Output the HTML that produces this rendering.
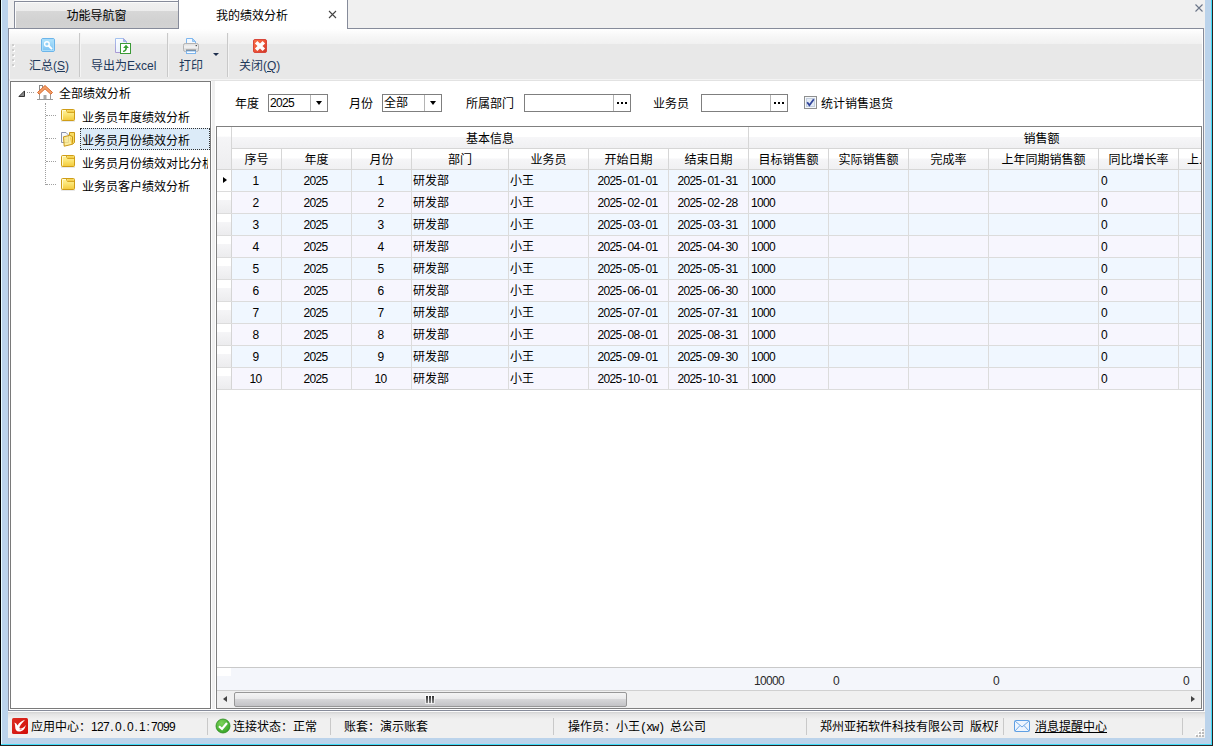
<!DOCTYPE html>
<html lang="zh-CN">
<head>
<meta charset="utf-8">
<title>我的绩效分析</title>
<style>
*{box-sizing:border-box;margin:0;padding:0}
html,body{width:1213px;height:746px;overflow:hidden}
body{position:relative;background:#bbd3eb;font-family:"Liberation Sans","Noto Sans CJK SC",sans-serif;font-size:12px;color:#000;line-height:1}
.abs{position:absolute}
#client{left:8px;top:0;width:1197px;height:738px;background:#f0f0f0}
/* tabs */
#tab1{left:14px;top:1px;width:165px;height:28px;border:1px solid #868b9a;background:linear-gradient(#f1f1f1 0,#ececec 9px,#d7d7d7 9px,#d1d1d1 20px,#d3d3d3 26px);box-shadow:inset 1px 1px 0 #fbfbfb;text-align:center;line-height:29px}
#tab2{left:179px;top:0;width:169px;height:29px;border-right:1px solid #868b9a;background:#fff;line-height:33px}
#frame{left:8px;top:28px;width:1196px;height:683px;border:1px solid #868b9a;background:#fff}
#frametopfix{left:179px;top:28px;width:168px;height:1px;background:#fff}
#toolbar{left:10px;top:29px;width:1192px;height:50px;background:linear-gradient(#ffffff 0,#f6f6f6 8px,#f1f1f1 15px,#e8e8e8 15px,#e8e8e8 100%)}
.tsep{top:33px;width:1px;height:44px;background:#c9c9c9;box-shadow:1px 0 0 #f4f4f4}
.tlabel{top:59px;height:14px;line-height:14px;color:#1e395b;white-space:nowrap;font-size:12px}
/* tree */
#tree{left:10px;top:81px;width:201px;height:628px;border:1px solid #7a7a7a;background:#fff;overflow:hidden}
.tnode{position:absolute;left:0;height:22px;line-height:22px;white-space:nowrap}
.folder{position:absolute;width:16px;height:16px}
/* right */
#right{left:216px;top:81px;width:987px;height:629px;background:#fff}
.lbl{position:absolute;top:97px;height:14px;line-height:14px;white-space:nowrap}
.combo{position:absolute;top:94px;height:18px;border:1px solid #7f7f7f;background:#fff;line-height:17px;padding-left:1px;white-space:nowrap}
.combo .btn{position:absolute;right:0;top:0;width:17px;height:16px;border-left:1px solid #b4b4b4}
.combo .btn i{position:absolute;left:5px;top:6px;border:3.5px solid transparent;border-top:4px solid #000;border-bottom:0}
.combo .dots{position:absolute;right:0;top:0;width:17px;height:16px;border-left:1px solid #b4b4b4}
.combo .dots b{position:absolute;left:3px;top:7px;width:2px;height:2px;background:#000;box-shadow:4px 0 0 #000,8px 0 0 #000}
/* grid */
#grid{left:216px;top:126px;width:986px;height:583px;border:1px solid #808080;background:#fff;overflow:hidden}
.hd{position:absolute;background:linear-gradient(#ffffff 0,#ffffff 47%,#f6f6f8 48%,#f0f0f2 100%);border-right:1px solid #d6d6d6;border-bottom:1px solid #d6d6d6;text-align:center;white-space:nowrap;overflow:hidden}
.row{position:absolute;left:0;width:984px;height:22px;border-bottom:1px solid #dcdcdc}
.row.a{background:#f0f7ff}
.row.b{background:#f7f6fe}
.c{position:absolute;top:0;height:21px;line-height:22px;border-right:1px solid #dcdcdc;white-space:nowrap;overflow:hidden;padding-left:1px}
.c.ctr{text-align:center;padding-left:0}
.c.n{line-height:22px;padding-left:2px}
.c.ctr.n{padding-left:0;padding-right:2px}
.ind{position:absolute;left:0;top:0;width:15px;height:21px;background:linear-gradient(#ffffff 0,#ffffff 38%,#f5f5f7 40%,#ececee 100%);border-right:1px solid #d5d5d5}
.n{font-family:"Liberation Sans","Noto Sans CJK SC",sans-serif;letter-spacing:-0.67px}
.n i{display:inline-block;width:6px;text-align:center;letter-spacing:0;font-style:normal}
.m{font-family:"Liberation Mono","Noto Sans CJK SC",monospace;letter-spacing:-1.2px}
/* status */
.sb{position:absolute;top:720px;height:14px;line-height:14px;white-space:nowrap}
.ssep{position:absolute;top:718px;width:1px;height:17px;background:#c9c9c9}
</style>
</head>
<body>
<div class="abs" id="client"></div>
<div class="abs" style="left:0;top:0;width:1px;height:746px;background:#000"></div>
<div class="abs" style="left:1px;top:0;width:1px;height:744px;background:#e6fbff"></div>
<div class="abs" style="left:1px;top:744px;width:1211px;height:1px;background:#3fdcf8"></div>
<div class="abs" style="left:1211px;top:0;width:1px;height:745px;background:#3fdcf8"></div>
<div class="abs" style="left:0;top:745px;width:1213px;height:1px;background:#2b2222"></div>
<div class="abs" style="left:1212px;top:0;width:1px;height:746px;background:#2b2222"></div>

<div class="abs" id="frame"></div>
<div class="abs" style="left:15px;top:0;width:163px;height:1px;background:#fbfbfb"></div>
<div class="abs" style="left:178px;top:0;width:1px;height:2px;background:#868b9a"></div>
<div class="abs" id="tab1">功能导航窗</div>
<div class="abs" id="tab2"><span style="position:absolute;left:37px">我的绩效分析</span>
<svg class="abs" style="left:149px;top:10px" width="9" height="9" viewBox="0 0 9 9"><path d="M1 1L8 8M8 1L1 8" stroke="#444" stroke-width="1.1" fill="none"/></svg></div>
<div class="abs" id="frametopfix"></div>
<svg class="abs" style="left:1194px;top:3px" width="10" height="10" viewBox="0 0 10 10"><path d="M1.5 1.5L8.5 8.5M8.5 1.5L1.5 8.5" stroke="#6b7588" stroke-width="1.1" fill="none"/></svg>

<div class="abs" id="toolbar"></div>
<div class="abs" style="left:9px;top:79px;width:1194px;height:2px;background:#f4f4f4"></div>
<div class="abs" style="left:211px;top:80px;width:992px;height:1px;background:#e2e2e2"></div>
<div class="abs" style="left:212px;top:81px;width:3px;height:628px;background:#f0f0f0"></div>
<div class="abs" style="left:12px;top:44px;width:2px;height:2px;background:#cdcdcd;box-shadow:1px 1px 0 #fff"></div>
<div class="abs" style="left:12px;top:49px;width:2px;height:2px;background:#cdcdcd;box-shadow:1px 1px 0 #fff"></div>
<div class="abs" style="left:12px;top:54px;width:2px;height:2px;background:#cdcdcd;box-shadow:1px 1px 0 #fff"></div>
<div class="abs" style="left:12px;top:59px;width:2px;height:2px;background:#cdcdcd;box-shadow:1px 1px 0 #fff"></div>
<div class="abs" style="left:12px;top:64px;width:2px;height:2px;background:#cdcdcd;box-shadow:1px 1px 0 #fff"></div>
<div class="abs tsep" style="left:79px"></div>
<div class="abs tsep" style="left:167px"></div>
<div class="abs tsep" style="left:227px"></div>
<svg class="abs" style="left:41px;top:38px" width="14" height="14" viewBox="0 0 14 14">
<defs><linearGradient id="sg" x1="0" y1="0" x2="0" y2="1"><stop offset="0" stop-color="#b4e6fd"/><stop offset="1" stop-color="#79c0f2"/></linearGradient></defs>
<rect x=".5" y=".5" width="13" height="13" rx="1.5" fill="url(#sg)" stroke="#6cb5ea"/>
<rect x="1.5" y="1.5" width="11" height="11" fill="none" stroke="#a8dcfa" stroke-width="1"/>
<circle cx="5.9" cy="6" r="2.3" fill="#8fd0f8" stroke="#fff" stroke-width="1.4"/>
<path d="M7.9 8L10.3 10.4" stroke="#fff" stroke-width="2" stroke-linecap="square"/>
</svg>
<div class="abs tlabel" style="left:29px">汇总(<u>S</u>)</div>
<svg class="abs" style="left:115px;top:38px" width="17" height="17" viewBox="0 0 17 17">
<defs><linearGradient id="pg" x1="0" y1="0" x2="1" y2="1"><stop offset="0" stop-color="#ffffff"/><stop offset="1" stop-color="#dbeafb"/></linearGradient>
<linearGradient id="pb" x1="0" y1="0" x2="0" y2="1"><stop offset="0" stop-color="#a3c2ef"/><stop offset="1" stop-color="#a998d4"/></linearGradient></defs>
<path d="M.5 .5H8.5L11.5 3.5V14.5H.5Z" fill="url(#pg)" stroke="url(#pb)"/>
<path d="M8.5 .5V3.5H11.5Z" fill="#8cc4f6" stroke="#a79fd8" stroke-width=".8"/>
<rect x="5.5" y="5.5" width="10" height="10" fill="#fff" stroke="#3c9a37"/>
<path d="M11 6.8L13.9 10H12C12 12.4 10.6 13.9 8 13.9V12.7C9.4 12.6 10.2 11.8 10.2 10H8.1Z" fill="#38a032"/>
</svg>
<div class="abs tlabel" style="left:91px">导出为Excel</div>
<svg class="abs" style="left:183px;top:38px" width="16" height="16" viewBox="0 0 16 16">
<defs><linearGradient id="prb" x1="0" y1="0" x2="0" y2="1"><stop offset="0" stop-color="#dcdcdc"/><stop offset=".45" stop-color="#f4f4f4"/><stop offset=".7" stop-color="#d9d9d9"/><stop offset="1" stop-color="#ececec"/></linearGradient></defs>
<path d="M3.5 .5H9.5L12.5 3.5V6H3.5Z" fill="#f3f9ff" stroke="#7eb6ee"/>
<path d="M9.5 .5V3.5H12.5Z" fill="#a8d2f7" stroke="#7eb6ee" stroke-width=".8"/>
<rect x=".5" y="5.5" width="15" height="8" rx="1.8" fill="url(#prb)" stroke="#b3b3b3"/>
<rect x="3" y="11.6" width="10" height="1.4" fill="#6f6f6f"/>
<rect x="3.5" y="13" width="9" height="2.5" fill="#fafdff" stroke="#7eb6ee"/>
<rect x="12.6" y="7" width="1.4" height="1.2" fill="#555"/>
</svg>
<div class="abs tlabel" style="left:179px">打印</div>
<div class="abs" style="left:213px;top:53px;width:0;height:0;border:3px solid transparent;border-top:3px solid #1e2f4d;border-bottom:0"></div>
<svg class="abs" style="left:253px;top:39px" width="14" height="14" viewBox="0 0 14 14">
<defs><linearGradient id="rg" x1="0" y1="0" x2="1" y2="1"><stop offset="0" stop-color="#f8744a"/><stop offset=".5" stop-color="#ee5536"/><stop offset="1" stop-color="#cc352b"/></linearGradient></defs>
<rect x=".5" y=".5" width="13" height="13" rx="1.5" fill="url(#rg)" stroke="#d8473a"/>
<path d="M4.4 1.9L7 4.5L9.6 1.9L12.1 4.4L9.5 7L12.1 9.6L9.6 12.1L7 9.5L4.4 12.1L1.9 9.6L4.5 7L1.9 4.4Z" fill="#fdfdfd"/>
</svg>
<div class="abs tlabel" style="left:239px">关闭(<u>Q</u>)</div>

<div class="abs" id="tree">
<svg class="abs" style="left:7px;top:8px" width="7" height="7" viewBox="0 0 7 7"><path d="M6.5 .9V6.5H.9Z" fill="#8a8a8a" stroke="#333" stroke-width="1"/></svg>
<div class="abs" style="left:16px;top:10px;width:7px;height:0;border-top:1px dotted #a0a0a0"></div>
<div class="abs" style="left:34px;top:21px;width:0;height:82px;border-left:1px dotted #a0a0a0"></div>
<div class="abs" style="left:35px;top:33px;width:10px;height:0;border-top:1px dotted #a0a0a0"></div>
<div class="abs" style="left:35px;top:56px;width:10px;height:0;border-top:1px dotted #a0a0a0"></div>
<div class="abs" style="left:35px;top:79px;width:10px;height:0;border-top:1px dotted #a0a0a0"></div>
<div class="abs" style="left:35px;top:102px;width:10px;height:0;border-top:1px dotted #a0a0a0"></div>
<svg class="abs" style="left:25px;top:2px" width="18" height="18" viewBox="0 0 18 18">
<rect x="3.5" y="1.5" width="3" height="5" fill="#fff" stroke="#8a8a8a"/>
<path d="M3.5 8V15.5H14.5V8L9 3Z" fill="#fff" stroke="#9a9a9a"/>
<rect x="7.5" y="11" width="3" height="4.5" fill="#a8a8a8"/>
<path d="M1.5 8.5L9 1.5L16.5 8.5L14.8 10.2L9 4.8L3.2 10.2Z" fill="#f3a06a" stroke="#d9682a" stroke-width="1"/>
<path d="M1 15.5H17" stroke="#9a9a9a"/>
</svg>
<div class="tnode" style="left:48px;top:1px">全部绩效分析</div>
<svg class="abs" style="left:50px;top:27px" width="14" height="13" viewBox="0 0 14 13">
<defs><linearGradient id="fg0" x1="0" y1="0" x2="0" y2="1"><stop offset="0" stop-color="#fff5a6"/><stop offset=".5" stop-color="#fbe36e"/><stop offset="1" stop-color="#f3c93a"/></linearGradient></defs>
<rect x="0" y="11.6" width="14" height="1.2" fill="#d8d8d8" opacity=".7"/>
<rect x=".5" y=".5" width="13" height="11" rx="1" fill="url(#fg0)" stroke="#cf9d17"/>
<path d="M5.3 1L6.4 3.5H13" fill="none" stroke="#d7a823" stroke-width="1"/>
<path d="M6.2 1.2H12.8V3H7Z" fill="#f4cf4a"/>
<path d="M1.5 10.5V1.5H5" fill="none" stroke="#fffbd6" stroke-width="1" opacity=".9"/>
</svg>
<div class="tnode" style="left:71px;top:25px">业务员年度绩效分析</div>
<div class="abs" style="left:69px;top:46px;width:130px;height:22px;background:#dcebf8;border:1px dotted #333"></div>
<svg class="abs" style="left:50px;top:50px" width="15" height="15" viewBox="0 0 15 15">
<path d="M.5 .5H5L7.5 3V10.5H.5Z" fill="#f6f8fc" stroke="#8c93ab"/>
<path d="M2.5 5.5H5.5M2.5 7.5H5.5" stroke="#c9d3ea"/>
<path d="M8.5 3V.5H13.5V10.5L11.5 12.2" fill="#f7dc63" stroke="#c99716"/>
<path d="M2.5 4.8L8.8 3.4L11.5 4.6V12.2L3.2 14.2Z" fill="#fae88a" fill-opacity=".82" stroke="#c99716"/>
<path d="M9.5 5.5L11 12" stroke="#f2c945" stroke-width="1.2"/>
</svg>
<div class="tnode" style="left:71px;top:48px">业务员月份绩效分析</div>
<svg class="abs" style="left:50px;top:73px" width="14" height="13" viewBox="0 0 14 13">
<defs><linearGradient id="fg2" x1="0" y1="0" x2="0" y2="1"><stop offset="0" stop-color="#fff5a6"/><stop offset=".5" stop-color="#fbe36e"/><stop offset="1" stop-color="#f3c93a"/></linearGradient></defs>
<rect x="0" y="11.6" width="14" height="1.2" fill="#d8d8d8" opacity=".7"/>
<rect x=".5" y=".5" width="13" height="11" rx="1" fill="url(#fg2)" stroke="#cf9d17"/>
<path d="M5.3 1L6.4 3.5H13" fill="none" stroke="#d7a823" stroke-width="1"/>
<path d="M6.2 1.2H12.8V3H7Z" fill="#f4cf4a"/>
<path d="M1.5 10.5V1.5H5" fill="none" stroke="#fffbd6" stroke-width="1" opacity=".9"/>
</svg>
<div class="tnode" style="left:71px;top:71px;width:126px;overflow:hidden">业务员月份绩效对比分析</div>
<svg class="abs" style="left:50px;top:96px" width="14" height="13" viewBox="0 0 14 13">
<defs><linearGradient id="fg3" x1="0" y1="0" x2="0" y2="1"><stop offset="0" stop-color="#fff5a6"/><stop offset=".5" stop-color="#fbe36e"/><stop offset="1" stop-color="#f3c93a"/></linearGradient></defs>
<rect x="0" y="11.6" width="14" height="1.2" fill="#d8d8d8" opacity=".7"/>
<rect x=".5" y=".5" width="13" height="11" rx="1" fill="url(#fg3)" stroke="#cf9d17"/>
<path d="M5.3 1L6.4 3.5H13" fill="none" stroke="#d7a823" stroke-width="1"/>
<path d="M6.2 1.2H12.8V3H7Z" fill="#f4cf4a"/>
<path d="M1.5 10.5V1.5H5" fill="none" stroke="#fffbd6" stroke-width="1" opacity=".9"/>
</svg>
<div class="tnode" style="left:71px;top:94px">业务员客户绩效分析</div>
</div>

<div class="abs" id="right"></div>
<div class="lbl" style="left:235px">年度</div>
<div class="combo" style="left:268px;width:60px"><span class="n">2025</span><span class="btn"><i></i></span></div>
<div class="lbl" style="left:349px">月份</div>
<div class="combo" style="left:382px;width:60px">全部<span class="btn"><i></i></span></div>
<div class="lbl" style="left:466px">所属部门</div>
<div class="combo" style="left:524px;width:107px"><span class="dots"><b></b></span></div>
<div class="lbl" style="left:653px">业务员</div>
<div class="combo" style="left:701px;width:87px"><span class="dots"><b></b></span></div>
<svg class="abs" style="left:804px;top:96px" width="13" height="13" viewBox="0 0 13 13">
<rect x=".5" y=".5" width="12" height="12" fill="#f4f7fb" stroke="#8e8f8f"/>
<rect x="2.5" y="2.5" width="8" height="8" fill="#e4ebf5" stroke="#c3cede" stroke-width="1"/>
<path d="M3.2 6.2L5.4 9.2L9.8 3.2" fill="none" stroke="#31459b" stroke-width="1.8"/>
</svg>
<div class="lbl" style="left:821px">统计销售退货</div>

<div class="abs" id="grid">
<div class="hd" style="left:0;top:0;width:15px;height:43px;background:linear-gradient(#fff 0,#fff 22%,#f5f5f7 24%,#ededef 100%)"></div>
<div class="hd" style="left:15px;top:0;width:517px;height:22px;line-height:25px">基本信息</div>
<div class="hd" style="left:532px;top:0;width:586px;height:22px;line-height:25px">销售额</div>
<div class="hd" style="left:15px;top:22px;width:50px;height:21px;line-height:23px">序号</div>
<div class="hd" style="left:65px;top:22px;width:70px;height:21px;line-height:23px">年度</div>
<div class="hd" style="left:135px;top:22px;width:60px;height:21px;line-height:23px">月份</div>
<div class="hd" style="left:195px;top:22px;width:97px;height:21px;line-height:23px">部门</div>
<div class="hd" style="left:292px;top:22px;width:80px;height:21px;line-height:23px">业务员</div>
<div class="hd" style="left:372px;top:22px;width:80px;height:21px;line-height:23px">开始日期</div>
<div class="hd" style="left:452px;top:22px;width:80px;height:21px;line-height:23px">结束日期</div>
<div class="hd" style="left:532px;top:22px;width:80px;height:21px;line-height:23px">目标销售额</div>
<div class="hd" style="left:612px;top:22px;width:80px;height:21px;line-height:23px">实际销售额</div>
<div class="hd" style="left:692px;top:22px;width:80px;height:21px;line-height:23px">完成率</div>
<div class="hd" style="left:772px;top:22px;width:110px;height:21px;line-height:23px">上年同期销售额</div>
<div class="hd" style="left:882px;top:22px;width:80px;height:21px;line-height:23px">同比增长率</div>
<div class="hd" style="left:962px;top:22px;width:80px;height:21px;line-height:23px;text-align:left;padding-left:8px">上.</div>
<div class="row a" style="top:43px"><div class="ind" style="background:#fff"><i style="position:absolute;left:6px;top:7px;border:3.5px solid transparent;border-left:4px solid #000;border-right:0"></i></div><div class="c ctr n" style="left:15px;width:50px">1</div><div class="c ctr n" style="left:65px;width:70px">2025</div><div class="c ctr n" style="left:135px;width:60px">1</div><div class="c" style="left:195px;width:97px">研发部</div><div class="c" style="left:292px;width:80px">小王</div><div class="c ctr n" style="left:372px;width:80px">2025<i>-</i>01<i>-</i>01</div><div class="c ctr n" style="left:452px;width:80px">2025<i>-</i>01<i>-</i>31</div><div class="c n" style="left:532px;width:80px">1000</div><div class="c" style="left:612px;width:80px"></div><div class="c" style="left:692px;width:80px"></div><div class="c" style="left:772px;width:110px"></div><div class="c n" style="left:882px;width:80px">0</div><div class="c" style="left:962px;width:80px"></div></div>
<div class="row b" style="top:65px"><div class="ind"></div><div class="c ctr n" style="left:15px;width:50px">2</div><div class="c ctr n" style="left:65px;width:70px">2025</div><div class="c ctr n" style="left:135px;width:60px">2</div><div class="c" style="left:195px;width:97px">研发部</div><div class="c" style="left:292px;width:80px">小王</div><div class="c ctr n" style="left:372px;width:80px">2025<i>-</i>02<i>-</i>01</div><div class="c ctr n" style="left:452px;width:80px">2025<i>-</i>02<i>-</i>28</div><div class="c n" style="left:532px;width:80px">1000</div><div class="c" style="left:612px;width:80px"></div><div class="c" style="left:692px;width:80px"></div><div class="c" style="left:772px;width:110px"></div><div class="c n" style="left:882px;width:80px">0</div><div class="c" style="left:962px;width:80px"></div></div>
<div class="row a" style="top:87px"><div class="ind"></div><div class="c ctr n" style="left:15px;width:50px">3</div><div class="c ctr n" style="left:65px;width:70px">2025</div><div class="c ctr n" style="left:135px;width:60px">3</div><div class="c" style="left:195px;width:97px">研发部</div><div class="c" style="left:292px;width:80px">小王</div><div class="c ctr n" style="left:372px;width:80px">2025<i>-</i>03<i>-</i>01</div><div class="c ctr n" style="left:452px;width:80px">2025<i>-</i>03<i>-</i>31</div><div class="c n" style="left:532px;width:80px">1000</div><div class="c" style="left:612px;width:80px"></div><div class="c" style="left:692px;width:80px"></div><div class="c" style="left:772px;width:110px"></div><div class="c n" style="left:882px;width:80px">0</div><div class="c" style="left:962px;width:80px"></div></div>
<div class="row b" style="top:109px"><div class="ind"></div><div class="c ctr n" style="left:15px;width:50px">4</div><div class="c ctr n" style="left:65px;width:70px">2025</div><div class="c ctr n" style="left:135px;width:60px">4</div><div class="c" style="left:195px;width:97px">研发部</div><div class="c" style="left:292px;width:80px">小王</div><div class="c ctr n" style="left:372px;width:80px">2025<i>-</i>04<i>-</i>01</div><div class="c ctr n" style="left:452px;width:80px">2025<i>-</i>04<i>-</i>30</div><div class="c n" style="left:532px;width:80px">1000</div><div class="c" style="left:612px;width:80px"></div><div class="c" style="left:692px;width:80px"></div><div class="c" style="left:772px;width:110px"></div><div class="c n" style="left:882px;width:80px">0</div><div class="c" style="left:962px;width:80px"></div></div>
<div class="row a" style="top:131px"><div class="ind"></div><div class="c ctr n" style="left:15px;width:50px">5</div><div class="c ctr n" style="left:65px;width:70px">2025</div><div class="c ctr n" style="left:135px;width:60px">5</div><div class="c" style="left:195px;width:97px">研发部</div><div class="c" style="left:292px;width:80px">小王</div><div class="c ctr n" style="left:372px;width:80px">2025<i>-</i>05<i>-</i>01</div><div class="c ctr n" style="left:452px;width:80px">2025<i>-</i>05<i>-</i>31</div><div class="c n" style="left:532px;width:80px">1000</div><div class="c" style="left:612px;width:80px"></div><div class="c" style="left:692px;width:80px"></div><div class="c" style="left:772px;width:110px"></div><div class="c n" style="left:882px;width:80px">0</div><div class="c" style="left:962px;width:80px"></div></div>
<div class="row b" style="top:153px"><div class="ind"></div><div class="c ctr n" style="left:15px;width:50px">6</div><div class="c ctr n" style="left:65px;width:70px">2025</div><div class="c ctr n" style="left:135px;width:60px">6</div><div class="c" style="left:195px;width:97px">研发部</div><div class="c" style="left:292px;width:80px">小王</div><div class="c ctr n" style="left:372px;width:80px">2025<i>-</i>06<i>-</i>01</div><div class="c ctr n" style="left:452px;width:80px">2025<i>-</i>06<i>-</i>30</div><div class="c n" style="left:532px;width:80px">1000</div><div class="c" style="left:612px;width:80px"></div><div class="c" style="left:692px;width:80px"></div><div class="c" style="left:772px;width:110px"></div><div class="c n" style="left:882px;width:80px">0</div><div class="c" style="left:962px;width:80px"></div></div>
<div class="row a" style="top:175px"><div class="ind"></div><div class="c ctr n" style="left:15px;width:50px">7</div><div class="c ctr n" style="left:65px;width:70px">2025</div><div class="c ctr n" style="left:135px;width:60px">7</div><div class="c" style="left:195px;width:97px">研发部</div><div class="c" style="left:292px;width:80px">小王</div><div class="c ctr n" style="left:372px;width:80px">2025<i>-</i>07<i>-</i>01</div><div class="c ctr n" style="left:452px;width:80px">2025<i>-</i>07<i>-</i>31</div><div class="c n" style="left:532px;width:80px">1000</div><div class="c" style="left:612px;width:80px"></div><div class="c" style="left:692px;width:80px"></div><div class="c" style="left:772px;width:110px"></div><div class="c n" style="left:882px;width:80px">0</div><div class="c" style="left:962px;width:80px"></div></div>
<div class="row b" style="top:197px"><div class="ind"></div><div class="c ctr n" style="left:15px;width:50px">8</div><div class="c ctr n" style="left:65px;width:70px">2025</div><div class="c ctr n" style="left:135px;width:60px">8</div><div class="c" style="left:195px;width:97px">研发部</div><div class="c" style="left:292px;width:80px">小王</div><div class="c ctr n" style="left:372px;width:80px">2025<i>-</i>08<i>-</i>01</div><div class="c ctr n" style="left:452px;width:80px">2025<i>-</i>08<i>-</i>31</div><div class="c n" style="left:532px;width:80px">1000</div><div class="c" style="left:612px;width:80px"></div><div class="c" style="left:692px;width:80px"></div><div class="c" style="left:772px;width:110px"></div><div class="c n" style="left:882px;width:80px">0</div><div class="c" style="left:962px;width:80px"></div></div>
<div class="row a" style="top:219px"><div class="ind"></div><div class="c ctr n" style="left:15px;width:50px">9</div><div class="c ctr n" style="left:65px;width:70px">2025</div><div class="c ctr n" style="left:135px;width:60px">9</div><div class="c" style="left:195px;width:97px">研发部</div><div class="c" style="left:292px;width:80px">小王</div><div class="c ctr n" style="left:372px;width:80px">2025<i>-</i>09<i>-</i>01</div><div class="c ctr n" style="left:452px;width:80px">2025<i>-</i>09<i>-</i>30</div><div class="c n" style="left:532px;width:80px">1000</div><div class="c" style="left:612px;width:80px"></div><div class="c" style="left:692px;width:80px"></div><div class="c" style="left:772px;width:110px"></div><div class="c n" style="left:882px;width:80px">0</div><div class="c" style="left:962px;width:80px"></div></div>
<div class="row b" style="top:241px"><div class="ind"></div><div class="c ctr n" style="left:15px;width:50px">10</div><div class="c ctr n" style="left:65px;width:70px">2025</div><div class="c ctr n" style="left:135px;width:60px">10</div><div class="c" style="left:195px;width:97px">研发部</div><div class="c" style="left:292px;width:80px">小王</div><div class="c ctr n" style="left:372px;width:80px">2025<i>-</i>10<i>-</i>01</div><div class="c ctr n" style="left:452px;width:80px">2025<i>-</i>10<i>-</i>31</div><div class="c n" style="left:532px;width:80px">1000</div><div class="c" style="left:612px;width:80px"></div><div class="c" style="left:692px;width:80px"></div><div class="c" style="left:772px;width:110px"></div><div class="c n" style="left:882px;width:80px">0</div><div class="c" style="left:962px;width:80px"></div></div>
<div class="abs" style="left:0;top:540px;width:984px;height:24px;background:#f4f6fb;border-top:1px solid #c9c9c9;border-bottom:1px solid #d0d0d0"></div>
<div class="abs" style="left:0;top:541px;width:14px;height:8px;background:#fff"></div>
<div class="abs n" style="left:537px;top:547px;height:14px;line-height:14px;color:#2a2a2a">10000</div>
<div class="abs n" style="left:616px;top:547px;height:14px;line-height:14px;color:#2a2a2a">0</div>
<div class="abs n" style="left:776px;top:547px;height:14px;line-height:14px;color:#2a2a2a">0</div>
<div class="abs n" style="left:966px;top:547px;height:14px;line-height:14px;color:#2a2a2a">0</div>
<div class="abs" style="left:0;top:564px;width:984px;height:17px;background:#f0f0f0"></div>
<div class="abs" style="left:17px;top:565px;width:393px;height:15px;border:1px solid #979797;border-radius:2px;background:linear-gradient(#f4f4f4 0,#e9e9ea 45%,#d6d6d8 50%,#c3c3c6 100%)"></div>
<div class="abs" style="left:209px;top:569px;width:2px;height:7px;background:linear-gradient(#2e2e2e,#8a8a8a);box-shadow:0 0 0 1px rgba(255,255,255,.55)"></div>
<div class="abs" style="left:212px;top:569px;width:2px;height:7px;background:linear-gradient(#2e2e2e,#8a8a8a);box-shadow:0 0 0 1px rgba(255,255,255,.55)"></div>
<div class="abs" style="left:215px;top:569px;width:2px;height:7px;background:linear-gradient(#2e2e2e,#8a8a8a);box-shadow:0 0 0 1px rgba(255,255,255,.55)"></div>
<div class="abs" style="left:6px;top:569px;width:0;height:0;border:3.5px solid transparent;border-right:4px solid #444;border-left:0"></div>
<div class="abs" style="left:974px;top:569px;width:0;height:0;border:3.5px solid transparent;border-left:4px solid #444;border-right:0"></div>
</div>

<div class="abs" style="left:8px;top:711px;width:1197px;height:8px;background:linear-gradient(#fcfcfc 0,#fcfcfc 1px,#d3d3d3 1px,#e3e3e3 3px,#f0f0f0 8px)"></div>
<svg class="abs" style="left:12px;top:718px" width="16" height="16" viewBox="0 0 16 16">
<defs><linearGradient id="lg" x1="0" y1="0" x2="1" y2="1"><stop offset="0" stop-color="#dc2d22"/><stop offset="1" stop-color="#d20d08"/></linearGradient></defs>
<rect x="0" y="0" width="16" height="16" rx="1.5" fill="url(#lg)"/>
<path d="M2.4 4.4C3.7 4.7 4.9 5.9 5.5 7.4C7.1 4.9 9.7 2.9 13 1.8C11.6 3.7 9.3 5.8 7.6 8.7C7.2 9.5 7.5 10.3 8.3 10.4C10.1 10.6 12.3 9 13.7 6.9C13.4 10.5 10.6 13.5 7 13.5C4.4 13.5 3.2 11.5 3.2 9C3.2 7.4 3 5.8 2.4 4.4Z" fill="#fff"/>
<path d="M7.2 10.8C8.2 11.6 9.6 11.4 10.6 10.6C9.6 12 7.8 12.2 7.2 10.8Z" fill="#d4130d"/>
</svg>
<div class="sb" style="left:31px">应用中心：<span class="n">127<i>.</i>0<i>.</i>0<i>.</i>1<i>:</i>7099</span></div>
<div class="ssep" style="left:207px"></div>
<div class="ssep" style="left:330px"></div>
<div class="ssep" style="left:553px"></div>
<div class="ssep" style="left:806px"></div>
<div class="ssep" style="left:1003px"></div>
<div class="ssep" style="left:1182px"></div>
<svg class="abs" style="left:215px;top:718px" width="16" height="16" viewBox="0 0 16 16">
<defs><radialGradient id="gg" cx=".4" cy=".3" r=".8"><stop offset="0" stop-color="#7bd35a"/><stop offset="1" stop-color="#2e9e1f"/></radialGradient></defs>
<circle cx="8" cy="8" r="7" fill="url(#gg)" stroke="#2b8a1e" stroke-width=".8"/>
<path d="M4 8.2L7 11L12 5" fill="none" stroke="#fff" stroke-width="2.2"/>
</svg>
<div class="sb" style="left:233px">连接状态：正常</div>
<div class="sb" style="left:344px">账套：演示账套</div>
<div class="sb" style="left:568px">操作员：小王<span class="m">(xw) </span>总公司</div>
<div class="sb" style="left:820px;width:178px;overflow:hidden">郑州亚拓软件科技有限公司<span class="m"> </span>版权所有</div>
<svg class="abs" style="left:1014px;top:720px" width="16" height="12" viewBox="0 0 16 12">
<rect x=".5" y=".5" width="15" height="11" rx="1" fill="#eef5fe" stroke="#5f9fe3"/>
<path d="M1 1L8 7L15 1M1 11L6 5.5M15 11L10 5.5" fill="none" stroke="#6ea8e6"/>
</svg>
<div class="sb" style="left:1035px;text-decoration:underline">消息提醒中心</div>
<div class="abs" style="left:1202px;top:729px;width:2px;height:2px;background:#bcbcbc;box-shadow:-1px -1px 0 #fff"></div>
<div class="abs" style="left:1199px;top:732px;width:2px;height:2px;background:#bcbcbc;box-shadow:-1px -1px 0 #fff"></div>
<div class="abs" style="left:1202px;top:732px;width:2px;height:2px;background:#bcbcbc;box-shadow:-1px -1px 0 #fff"></div>
<div class="abs" style="left:1196px;top:735px;width:2px;height:2px;background:#bcbcbc;box-shadow:-1px -1px 0 #fff"></div>
<div class="abs" style="left:1199px;top:735px;width:2px;height:2px;background:#bcbcbc;box-shadow:-1px -1px 0 #fff"></div>
<div class="abs" style="left:1202px;top:735px;width:2px;height:2px;background:#bcbcbc;box-shadow:-1px -1px 0 #fff"></div>
</body>
</html>
